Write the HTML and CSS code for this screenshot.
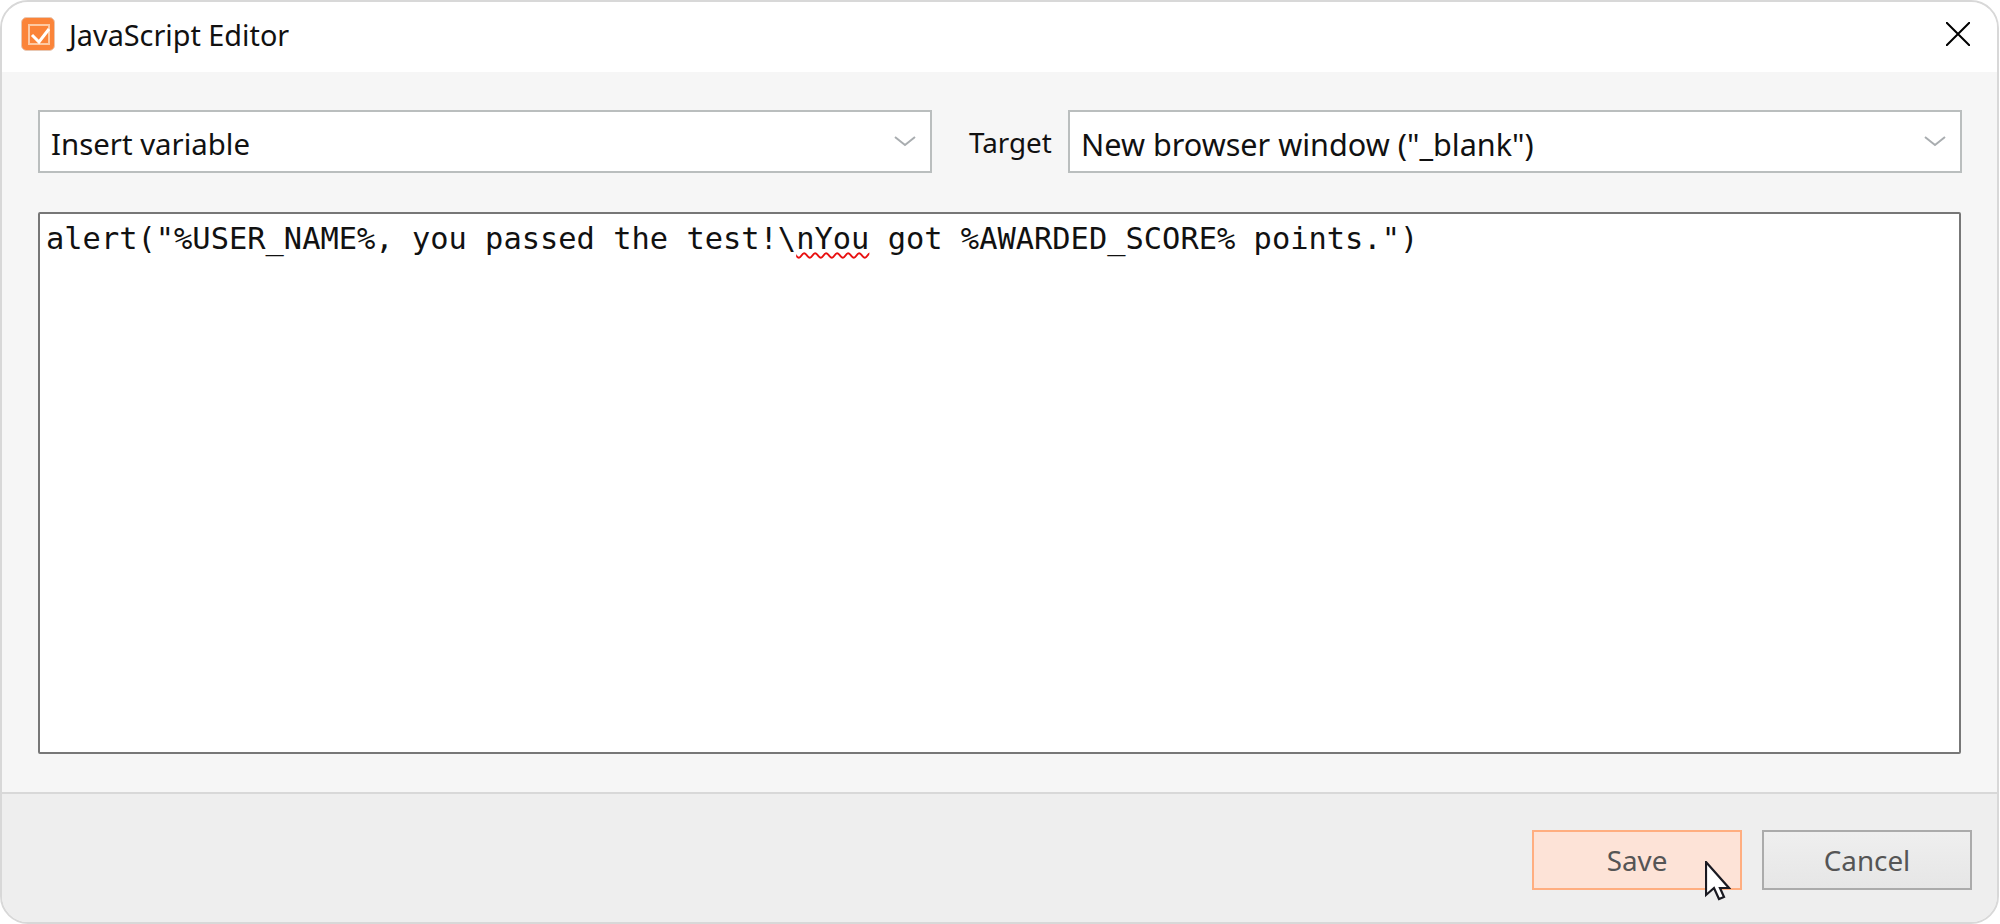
FILE: index.html
```html
<!DOCTYPE html>
<html lang="en">
<head>
<meta charset="utf-8">
<title>JavaScript Editor</title>
<link rel="stylesheet" href="styles.css">
</head>
<body>
<div class="window">
  <header class="titlebar">
    <svg class="app-icon" width="34" height="34" viewBox="0 0 34 34">
      <rect x="0.5" y="0.5" width="33" height="33" rx="5" fill="#fb8439" stroke="#e8c8b4"/>
      <rect x="8" y="8" width="20" height="19" fill="none" stroke="#fdc9a3" stroke-width="2"/>
      <path d="M11 18l7 7 10-13" fill="none" stroke="#fff" stroke-width="3"/>
    </svg>
    <span class="title">JavaScript Editor</span>
    <svg class="close" width="24" height="24" viewBox="0 0 24 24">
      <path d="M0 0l24 24M24 0L0 24" stroke="#000" stroke-width="2" fill="none"/>
    </svg>
  </header>
  <main class="content">
    <div class="toolbar">
      <div class="combo combo-variable">
        <span>Insert variable</span>
        <svg class="chevron" width="22" height="11" viewBox="0 0 22 11"><path d="M1 1l10 8 10-8" fill="none" stroke="#a9adb0" stroke-width="2"/></svg>
      </div>
      <label class="target-label">Target</label>
      <div class="combo combo-target">
        <span>New browser window ("_blank")</span>
        <svg class="chevron" width="22" height="11" viewBox="0 0 22 11"><path d="M1 1l10 8 10-8" fill="none" stroke="#a9adb0" stroke-width="2"/></svg>
      </div>
    </div>
    <div class="editor">alert("%USER_NAME%, you passed the test!\<span class="misspelled">nYou</span> got %AWARDED_SCORE% points.")</div>
  </main>
  <footer class="footer">
    <button class="btn btn-save">Save</button>
    <button class="btn btn-cancel">Cancel</button>
    <svg class="cursor" width="26" height="40" viewBox="0 0 26 40">
      <path d="M1 1V34L9 27L14 38L19 36L15 27H24Z" fill="#fff" stroke="#1a1a22" stroke-width="2.2" stroke-linejoin="miter"/>
    </svg>
  </footer>
</div>
</body>
</html>
```
FILE: styles.css
```css
* { box-sizing: border-box; }
html, body { margin: 0; padding: 0; background: #fff; }
body { width: 2000px; height: 924px; overflow: hidden; font-family: "Noto Sans", "Open Sans", sans-serif; color: #111; }

.window {
  width: 1999px;
  height: 924px;
  display: flex;
  flex-direction: column;
  border: 2px solid #d8d8d8;
  border-radius: 28px;
  overflow: hidden;
  background: #f6f6f6;
}

.titlebar {
  height: 70px;
  flex: none;
  background: #fff;
  display: flex;
  align-items: center;
  padding: 0 27px 6px 19px;
}
.app-icon { flex: none; }
.title { font-size: 28.8px; margin-left: 14px; flex: 1; }
.close { flex: none; }

.content {
  flex: 1;
  display: flex;
  flex-direction: column;
  padding: 38px 35px 38px 36px;
  gap: 39px;
}

.toolbar { display: flex; align-items: center; height: 63px; flex: none; }
.combo {
  height: 63px;
  background: #fff;
  border: 2px solid #babebe;
  display: flex;
  align-items: center;
  justify-content: space-between;
  padding: 4px 14px 0 11px;
}
.chevron { flex: none; margin-top: -4px; }
.combo-variable { width: 894px; flex: none; font-size: 29.4px; }
.combo-target { width: 894px; flex: none; font-size: 30.6px; }
.target-label { width: 136px; flex: none; padding-left: 37px; font-size: 27.8px; }

.editor {
  flex: 1;
  background: #fff;
  border: 2px solid #777;
  border-radius: 2px;
  padding: 5px 6px;
  margin-right: 1px;
  font-family: "DejaVu Sans Mono", "Liberation Mono", monospace;
  font-size: 30.4px;
  line-height: 40px;
  white-space: pre;
  color: #111;
}
.misspelled { text-decoration: underline wavy #e81010 1.5px; text-underline-offset: 3px; }

.footer {
  height: 130px;
  flex: none;
  background: #eee;
  border-top: 2px solid #d8d8d8;
  display: flex;
  justify-content: flex-end;
  align-items: flex-start;
  gap: 20px;
  padding: 36px 25px 0 0;
  position: relative;
}
.btn {
  width: 210px;
  height: 60px;
  font: inherit;
  font-size: 27.8px;
  color: #555;
  padding: 0;
  border-radius: 0;
}
.btn-save { background: #fde3d7; border: 2px solid #ffae80; }
.btn-cancel { background: linear-gradient(#efefef, #e6e6e6); border: 2px solid #ababab; }
.cursor { position: absolute; left: 1703px; top: 67px; }
```
